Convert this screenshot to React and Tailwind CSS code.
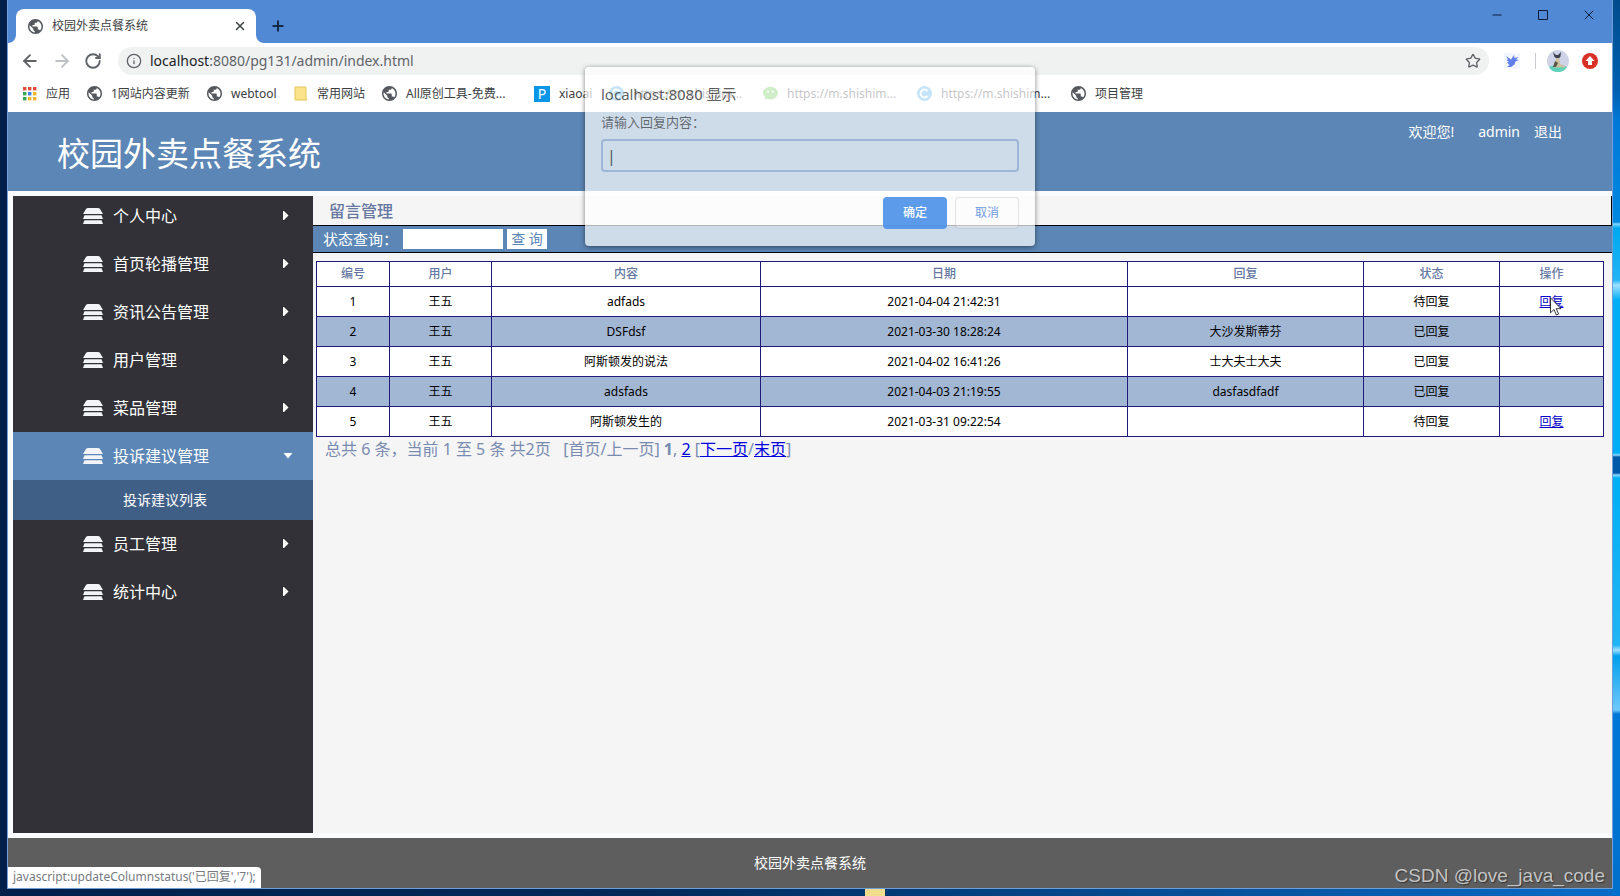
import React from "react";
import { ArrowLeft, ArrowRight, RotateCw, Info, Star, X, Plus, Minus, Square } from "lucide-react";

const menus = [
  { title: "个人中心" },
  { title: "首页轮播管理" },
  { title: "资讯公告管理" },
  { title: "用户管理" },
  { title: "菜品管理" },
  { title: "投诉建议管理", open: true, children: ["投诉建议列表"] },
  { title: "员工管理" },
  { title: "统计中心" },
];

const rows = [
  { id: 1, user: "王五", content: "adfads", date: "2021-04-04 21:42:31", reply: "", status: "待回复" },
  { id: 2, user: "王五", content: "DSFdsf", date: "2021-03-30 18:28:24", reply: "大沙发斯蒂芬", status: "已回复" },
  { id: 3, user: "王五", content: "阿斯顿发的说法", date: "2021-04-02 16:41:26", reply: "士大夫士大夫", status: "已回复" },
  { id: 4, user: "王五", content: "adsfads", date: "2021-04-03 21:19:55", reply: "dasfasdfadf", status: "已回复" },
  { id: 5, user: "王五", content: "阿斯顿发生的", date: "2021-03-31 09:22:54", reply: "", status: "待回复" },
];

const columns = [
  { name: "编号", width: "w-[73px]" },
  { name: "用户", width: "w-[102px]" },
  { name: "内容", width: "w-[269px]" },
  { name: "日期", width: "" },
  { name: "回复", width: "w-[236px]" },
  { name: "状态", width: "w-[136px]" },
  { name: "操作", width: "w-[104px]" },
];

const bookmarks = [
  { icon: "apps", text: "应用", width: "w-16" },
  { icon: "globe", text: "1网站内容更新", width: "w-[120px]" },
  { icon: "globe", text: "webtool", width: "w-[87px]" },
  { icon: "folder", text: "常用网站", width: "w-[88px]" },
  { icon: "globe", text: "All原创工具-免费...", width: "w-[152px]" },
  { icon: "p", text: "xiaoai", width: "w-[75px]" },
  { icon: "c", text: "https://m.shishim...", width: "w-[154px]" },
  { icon: "wechat", text: "https://m.shishim...", width: "w-[154px]" },
  { icon: "c", text: "https://m.shishim...", width: "w-[154px]" },
  { icon: "globe", text: "项目管理", width: "w-20" },
];

function Globe() {
  return (
    <svg className="w-[15px] h-[15px] shrink-0" viewBox="2 2 20 20">
      <path
        fill="#55595e"
        d="M12 2C6.48 2 2 6.48 2 12s4.480 10 10 10 10-4.480 10-10S17.520 2 12 2zm-1 17.930c-3.950-.49-7-3.850-7-7.930 0-.62.08-1.210.21-1.790L9 15v1c0 1.100.9 2 2 2v1.930zm6.900-2.540c-.26-.81-1-1.390-1.900-1.390h-1v-3c0-.55-.45-1-1-1H8v-2h2c.55 0 1-.45 1-1V7h2c1.100 0 2-.9 2-2v-.41c2.930 1.190 5 4.060 5 7.410 0 2.080-.8 3.970-2.100 5.390z"
      />
    </svg>
  );
}

function BookmarkIcon({ type }) {
  if (type === "apps") {
    const colors = ["#e04a3f", "#e04a3f", "#e04a3f", "#36a457", "#3f7de0", "#f0b428", "#36a457", "#f0b428", "#f0b428"];
    return (
      <svg className="w-[14px] h-[14px] shrink-0" viewBox="0 0 14 14">
        {colors.map((c, i) => (
          <rect key={i} x={(i % 3) * 5} y={Math.floor(i / 3) * 5} width="3.4" height="3.4" fill={c} />
        ))}
      </svg>
    );
  }
  if (type === "folder") {
    return (
      <svg className="w-[14px] h-[15px] shrink-0" viewBox="0 0 14 15">
        <path d="M1 1h11v11l1 2H1z" fill="#fae38a" stroke="#e3c65c" />
      </svg>
    );
  }
  if (type === "p") {
    return (
      <span className="w-4 h-4 shrink-0 bg-[#0a96e6] text-white text-sm leading-4 text-center">P</span>
    );
  }
  if (type === "wechat") {
    return (
      <svg className="w-[15px] h-[15px] shrink-0" viewBox="0 0 16 16">
        <ellipse cx="8" cy="7.5" rx="8" ry="6.8" fill="#5fc34c" />
        <path d="M3 12l-1 3 4-2z" fill="#5fc34c" />
        <circle cx="5.5" cy="6" r="1.1" fill="#fff" />
        <circle cx="10.5" cy="6" r="1.1" fill="#fff" />
      </svg>
    );
  }
  if (type === "c") {
    return (
      <svg className="w-[15px] h-[15px] shrink-0" viewBox="0 0 16 16">
        <circle cx="8" cy="8" r="8" fill="#3fa4ea" />
        <path d="M11.3 5.5a4.2 4.2 0 1 0 0 5" fill="none" stroke="#fff" strokeWidth="2" />
      </svg>
    );
  }
  return <Globe />;
}

function TitleBar() {
  return (
    <div className="flex h-[43px] bg-[#5289d5]">
      <div className="relative flex items-center self-end ml-2 w-60 h-[34px] pl-3 pr-2 rounded-t-lg bg-white">
        <svg className="absolute bottom-0 -left-2 w-2 h-2" viewBox="0 0 8 8">
          <path d="M8 0v8H0a8 8 0 0 0 8-8z" fill="#fff" />
        </svg>
        <svg className="absolute bottom-0 -right-2 w-2 h-2" viewBox="0 0 8 8">
          <path d="M0 0v8h8a8 8 0 0 1-8-8z" fill="#fff" />
        </svg>
        <Globe />
        <span className="ml-[9px] flex-1 text-xs text-[#3c4043]">校园外卖点餐系统</span>
        <button type="button" aria-label="close tab" className="p-px">
          <X className="w-[14px] h-[14px] text-[#3c4043]" strokeWidth={2.5} />
        </button>
      </div>
      <button type="button" aria-label="new tab" className="self-end h-[34px] ml-[14px]">
        <Plus className="w-4 h-4 text-[#14284a]" strokeWidth={3} />
      </button>
      <div className="flex ml-auto h-[30px] text-[#0d1c3a]">
        <button type="button" aria-label="minimize" className="w-[46px] flex items-center justify-center">
          <Minus className="w-[14px] h-[14px]" strokeWidth={2} />
        </button>
        <button type="button" aria-label="maximize" className="w-[46px] flex items-center justify-center">
          <svg className="w-[10px] h-[10px]" viewBox="0 0 10 10">
            <path d="M.5.5h9v9h-9z" fill="none" stroke="currentColor" />
          </svg>
        </button>
        <button type="button" aria-label="close" className="w-[46px] flex items-center justify-center">
          <X className="w-4 h-4" strokeWidth={1.5} />
        </button>
      </div>
    </div>
  );
}

function AddressBar() {
  return (
    <div className="flex items-center h-9 pl-3 pr-[14px] bg-white text-[#5f6368]">
      <button type="button" aria-label="back">
        <ArrowLeft className="w-5 h-5" strokeWidth={2.2} />
      </button>
      <button type="button" aria-label="forward" className="ml-3">
        <ArrowRight className="w-5 h-5 text-[#bdc1c6]" strokeWidth={2.2} />
      </button>
      <button type="button" aria-label="reload" className="ml-3">
        <RotateCw className="w-[18px] h-[18px]" strokeWidth={2.5} />
      </button>
      <div className="flex flex-1 items-center h-7 ml-4 px-2 rounded-full bg-[#f0f2f2]">
        <Info className="w-4 h-4" />
        <p className="flex-1 ml-2 text-sm">
          <span className="text-[#202124]">localhost</span>:8080/pg131/admin/index.html
        </p>
        <button type="button" aria-label="bookmark">
          <Star className="w-4 h-4" />
        </button>
      </div>
      <svg className="w-4 h-4 ml-[15px]" viewBox="0 0 16 16">
        <rect width="16" height="16" fill="#f4f6ff" />
        <path d="M2 3l5 3.5 3-4.500.5 3 4-1-2.500 2.500 3 .5-3.500 1.500-1 3-3.500 2.500-4 0L5.500 12 3 9.500l2-.5-2.500-2 1.500-.5z" fill="#5f7fee" />
      </svg>
      <span className="w-px h-4 ml-[15px] bg-[#c9ccd1]" />
      <svg className="w-[22px] h-[22px] ml-[11px]" viewBox="0 0 22 22">
        <circle cx="11" cy="11" r="11" fill="#cfd3e8" />
        <path d="M2 17c4-2.500 14-2.500 18 0-1.500 3-5 5-9 5s-7.500-2-9-5z" fill="#5fd1bb" />
        <path d="M6 2l3 3h2l3-3-.5 4.500L11 9.500 7.500 7z" fill="#3b4250" />
        <path d="M9 8h3l1 6 5 2v1.500H7L8.500 13z" fill="#cabf9f" />
        <path d="M8 11l3 2-2 4H6z" fill="#5a5648" />
      </svg>
      <svg className="w-4 h-4 ml-[13px]" viewBox="0 0 16 16">
        <circle cx="8" cy="8" r="8" fill="#d93025" />
        <path d="M8 3l4.500 5h-2.500v4H6V8H3.500z" fill="#fff" />
      </svg>
    </div>
  );
}

function BookmarksBar() {
  return (
    <div className="flex items-center h-[33px] pl-[15px] pb-1 bg-white overflow-hidden">
      {bookmarks.map((b, i) => (
        <a
          key={i}
          href="#"
          className={"flex items-center shrink-0 gap-[9px] text-xs text-[#3c4043] whitespace-nowrap " + b.width}
        >
          <BookmarkIcon type={b.icon} />
          {b.text}
        </a>
      ))}
    </div>
  );
}

function MenuIcon() {
  return (
    <svg className="w-5 h-[17px]" viewBox="0 0 20 17" fill="#f2f4f8">
      <path d="M5 0h10q1.200 0 2 1l3 5H0l3-5q.8-1 2-1z" />
      <path d="M1.500 7.200h17l1.500 3.800H0z" />
      <path d="M1.500 12.200h17L20 16H0z" />
    </svg>
  );
}

function Sidebar() {
  return (
    <aside className="w-[300px] shrink-0 overflow-hidden bg-[#313137] text-white">
      <ul className="-mt-1">
        {menus.map((m) => (
          <li key={m.title}>
            <a
              href="#"
              className={"flex items-center h-12 pl-[70px] pr-5 text-base " + (m.open ? "bg-[#5c86b5]" : "")}
            >
              <MenuIcon />
              <span className="ml-[10px] flex-1">{m.title}</span>
              {m.open ? (
                <svg className="w-[10px] h-[6px]" viewBox="0 0 10 6">
                  <path d="M.5 0h9L5 5.500z" fill="#fff" />
                </svg>
              ) : (
                <svg className="w-[10px] h-[10px]" viewBox="0 0 10 10">
                  <path d="M0 0h1l4.500 4.500L1 9H0z" fill="#fff" />
                </svg>
              )}
            </a>
            {m.children &&
              m.children.map((c) => (
                <a key={c} href="#" className="flex items-center h-10 pl-[110px] bg-[#3f5f87] text-sm">
                  {c}
                </a>
              ))}
          </li>
        ))}
      </ul>
    </aside>
  );
}

function Pointer() {
  return (
    <svg className="absolute left-[11px] top-1 w-3 h-5" viewBox="0 0 12 20">
      <path d="M.5.8v15l3.500-3.300 2.400 5.500 2.200-1-2.400-5.300h4.800z" fill="#fff" stroke="#222" strokeWidth=".9" />
    </svg>
  );
}

function MessageTable() {
  return (
    <table className="w-full table-fixed border-collapse bg-white text-xs text-center text-black">
      <thead>
        <tr className="h-[25px] text-[#66789f]">
          {columns.map((c) => (
            <th key={c.name} className={"border border-[#1f1a7a] font-medium " + c.width}>
              {c.name}
            </th>
          ))}
        </tr>
      </thead>
      <tbody>
        {rows.map((r) => (
          <tr key={r.id} className="h-[30px] even:bg-[#a2b7d3]">
            <td className="border border-[#1f1a7a]">{r.id}</td>
            <td className="border border-[#1f1a7a]">{r.user}</td>
            <td className="border border-[#1f1a7a]">{r.content}</td>
            <td className="border border-[#1f1a7a]">{r.date}</td>
            <td className="border border-[#1f1a7a]">{r.reply}</td>
            <td className="border border-[#1f1a7a]">{r.status}</td>
            <td className="border border-[#1f1a7a]">
              {r.status === "待回复" && (
                <a href="#" className="relative underline text-[#0000c8]">
                  回复
                  {r.id === 1 && <Pointer />}
                </a>
              )}
            </td>
          </tr>
        ))}
      </tbody>
    </table>
  );
}

function PromptDialog() {
  return (
    <div
      role="dialog"
      aria-label="localhost:8080 显示"
      className="absolute left-1/2 top-[67px] -translate-x-1/2 w-[450px] h-[179px] px-4 pt-4 rounded-sm bg-white/70 shadow-[0_1px_5px_rgba(0,0,0,0.5)]"
    >
      <h2 className="text-[15px] leading-[22px] text-black/65">localhost:8080 显示</h2>
      <label htmlFor="reply" className="block mt-2 text-[13px] leading-[18px] text-black/55">
        请输入回复内容：
      </label>
      <input
        id="reply"
        type="text"
        defaultValue="|"
        className="block w-full h-[33px] mt-2 px-1 rounded border-2 border-[#9fb5d6] text-base text-black/65 outline-none"
      />
      <div className="flex justify-end gap-2 mt-[25px] text-xs">
        <button type="button" className="w-16 h-8 rounded bg-[#4a90e8]/90 font-medium text-white">
          确定
        </button>
        <button type="button" className="w-16 h-8 rounded border border-black/10 bg-white/20 text-[#6f9be0]">
          取消
        </button>
      </div>
    </div>
  );
}

export default function App() {
  return (
    <div className="relative flex min-h-screen px-2 pb-2 bg-[linear-gradient(to_right,#00204a,#002a5a_40%,#0a6cc8)] font-['Noto_Sans','Noto_Sans_CJK_SC',sans-serif]">
      {/* wallpaper showing past the right edge */}
      <div className="absolute right-0 inset-y-0 w-2 bg-[linear-gradient(#004c8c,#0060b0_90px,#0078d7_120px,#0088e0_222px,#7fd4ff_224px,#00a8f0_228px,#20b4f4_280px,#a0e0ff_285px,#00aef5_300px,#00aef5_453px,#8fd8ff_455px,#0058a8_457px,#0058a8_473px,#8fd8ff_475px,#00b0f5_478px,#20b4f4_645px,#9fe0ff_650px,#00a0ec_656px,#6fc8fa_710px,#0078d7_714px,#006fcc)]" />
      <div className="absolute bottom-0 left-[865px] w-5 h-[7px] bg-[#f2dd8c]" />

      <div className="relative flex flex-col flex-1 min-w-0 bg-white outline outline-[#6f9fd8]">
        <TitleBar />
        <AddressBar />
        <BookmarksBar />

        <header className="flex h-[79px] pl-[49px] pr-[50px] bg-[#5c86b5] text-white">
          <h1 className="text-[33px] leading-[84px]">校园外卖点餐系统</h1>
          <div className="flex ml-auto pt-[10px] text-sm">
            <span>欢迎您!</span>
            <span className="ml-6">admin</span>
            <a href="#" className="ml-[14px]">退出</a>
          </div>
        </header>

        <main className="flex flex-1 py-[5px] pl-[5px] bg-[#fafbfc]">
          <Sidebar />
          <section className="flex-1 min-w-0 bg-[#f5f5f5]">
            <h2 className="h-[30px] pl-4 border-b border-r border-black text-base leading-[30px] font-medium text-[#66789f]">
              留言管理
            </h2>
            <form className="flex items-center h-[27px] pl-[10px] border-b border-black bg-[#5c86b5] text-[15px] text-white">
              <label htmlFor="status" className="w-20">状态查询：</label>
              <input id="status" type="text" className="w-[100px] h-5 bg-white px-1 text-sm text-black" />
              <button type="button" className="ml-1 w-10 h-5 bg-white text-sm leading-5 text-[#5c86b5]">
                查 询
              </button>
            </form>
            <div className="pl-[3px] pr-2 pt-2">
              <MessageTable />
            </div>
            <p className="pl-3 text-base leading-6 text-[#7a8bb0]">
              总共 6 条，当前 1 至 5 条 共2页 &nbsp;&nbsp;[首页/上一页] <b>1</b>, <a href="#" className="underline text-[#0000e0]">2</a> [
              <a href="#" className="underline text-[#0000e0]">下一页</a>/<a href="#" className="underline text-[#0000e0]">末页</a>]
            </p>
          </section>
        </main>

        <footer className="h-[50px] bg-[#5e5e5e] text-sm leading-[50px] text-center text-white">
          校园外卖点餐系统
        </footer>

        {/* link target bubble */}
        <div className="absolute left-0 bottom-0 h-[21px] px-[5px] rounded-tr bg-white text-xs leading-5 text-[#777b80]">
          javascript:updateColumnstatus('已回复','7');
        </div>
        <div className="absolute right-[7px] bottom-0 font-['Liberation_Sans'] text-[19px] leading-6 text-[#c4c4c4] [text-shadow:1px_1px_1px_#333]">
          CSDN @love_java_code
        </div>

        <PromptDialog />
      </div>
    </div>
  );
}
